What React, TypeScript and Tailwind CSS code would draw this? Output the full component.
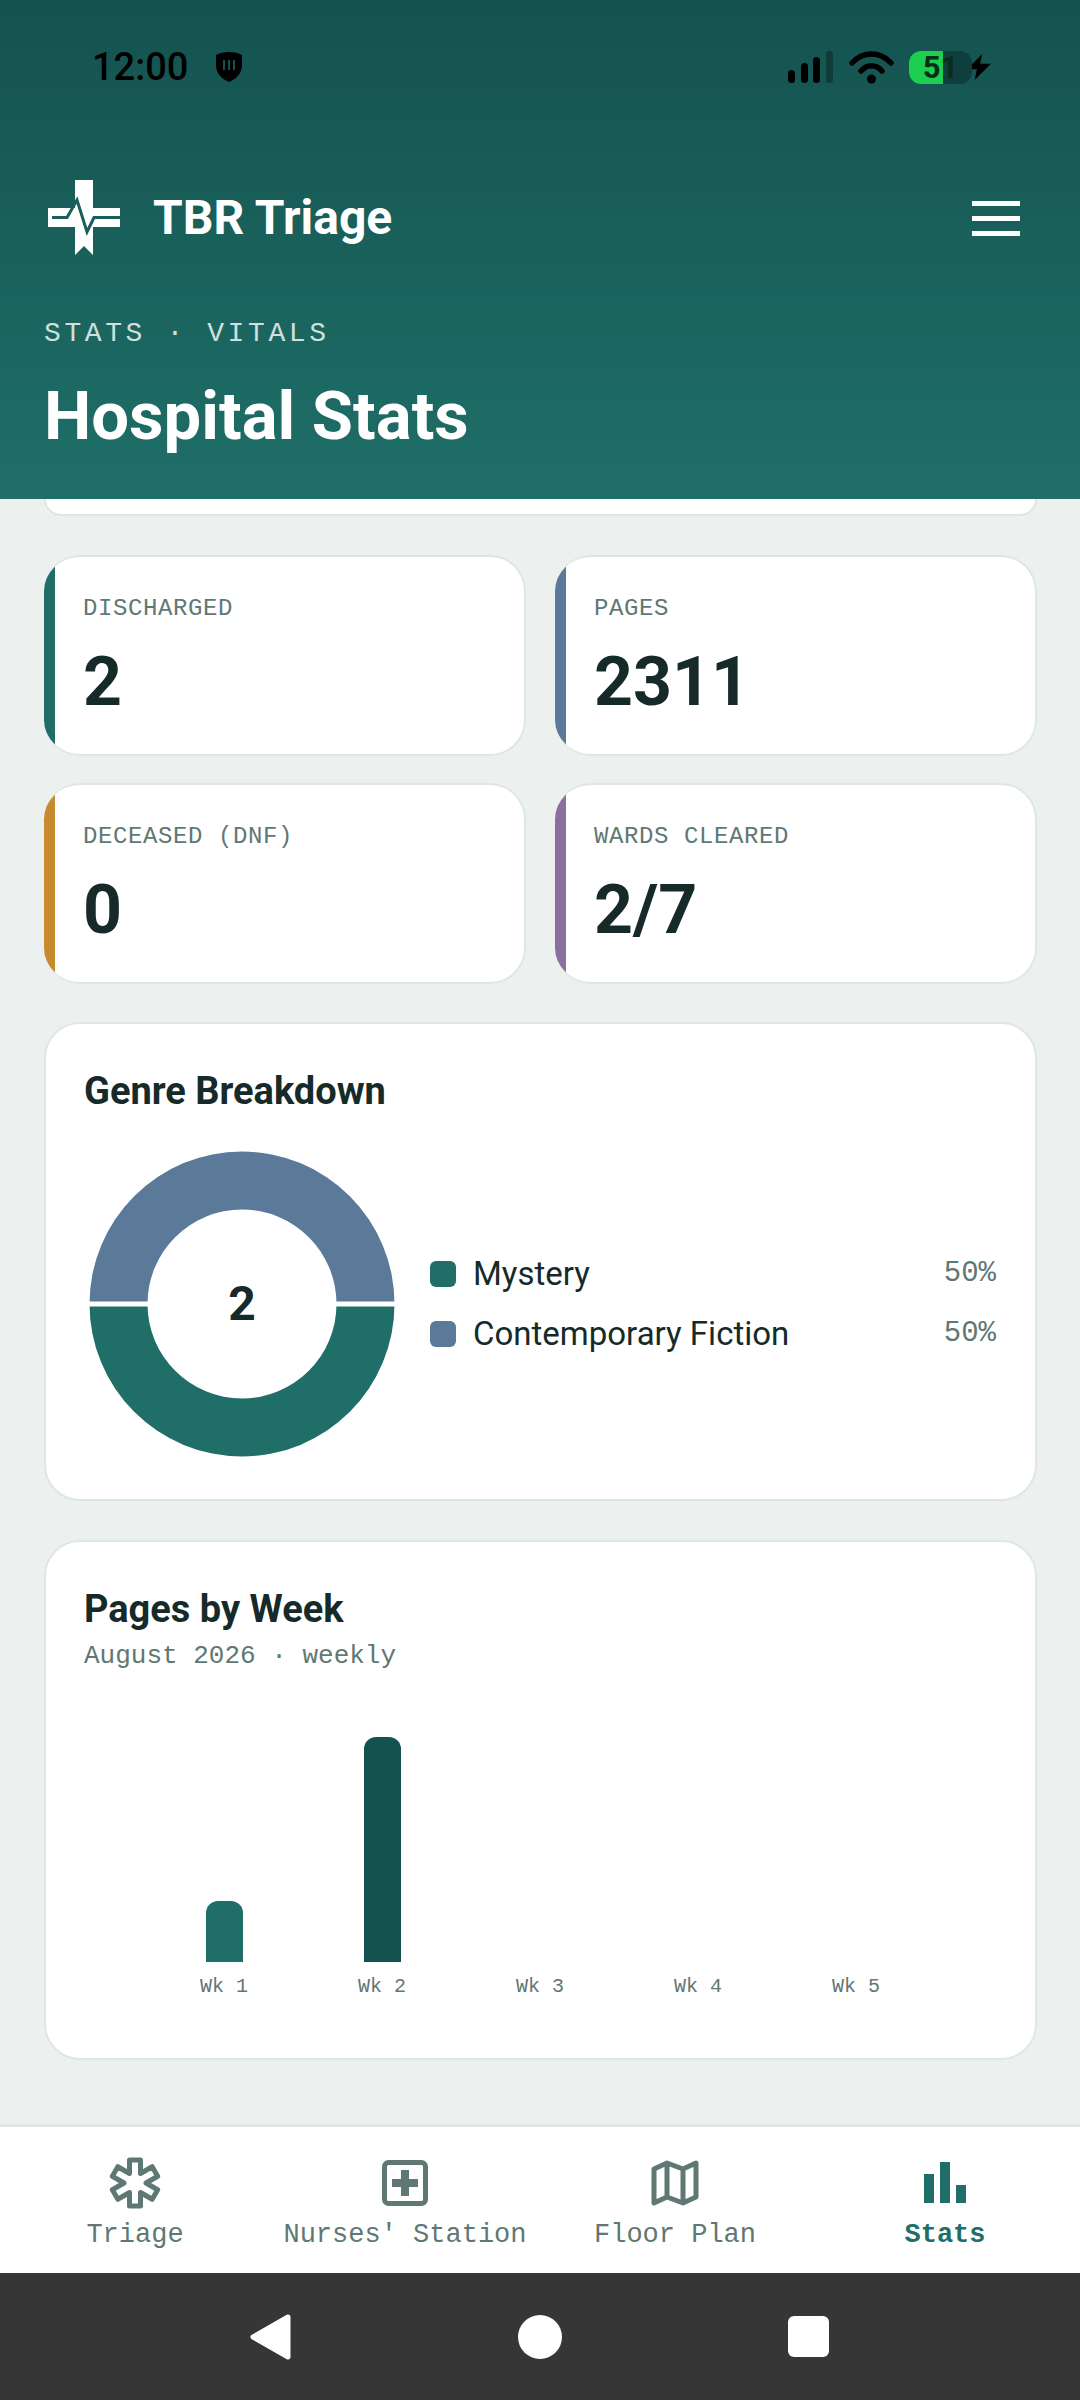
const sans = "font-['Roboto',sans-serif]";
const mono = "font-['Liberation_Mono',monospace]";

const stats = [
  { label: "DISCHARGED", value: "2", accent: "bg-[#1f6f68]" },
  { label: "PAGES", value: "2311", accent: "bg-[#5b7a99]" },
  { label: "DECEASED (DNF)", value: "0", accent: "bg-[#c88a2e]" },
  { label: "WARDS CLEARED", value: "2/7", accent: "bg-[#8b6fa0]" },
];

const weeks = [
  { label: "Wk 1", bar: "h-[61px] bg-[#1f6f68]" },
  { label: "Wk 2", bar: "h-[225px] bg-[#14524f]" },
  { label: "Wk 3", bar: "" },
  { label: "Wk 4", bar: "" },
  { label: "Wk 5", bar: "" },
];

// star of life outline, worked out from the arm size
const starPoints = Array.from({ length: 6 }, (_, i) => {
  const a = ((i * 60 - 90) * Math.PI) / 180;
  const b = a + Math.PI / 6;
  const L = 23;
  const w = 5.5;
  const p = (x: number, y: number) => `${(26 + x).toFixed(2)},${(26 + y).toFixed(2)}`;
  return [
    p(L * Math.cos(a) + w * Math.sin(a), L * Math.sin(a) - w * Math.cos(a)),
    p(L * Math.cos(a) - w * Math.sin(a), L * Math.sin(a) + w * Math.cos(a)),
    p(2 * w * Math.cos(b), 2 * w * Math.sin(b)),
  ].join(" ");
}).join(" ");

const StatusBar = () => (
  <div className="flex h-[44px] items-center justify-between pl-[92px] pr-[89px] text-black">
    <div className="flex items-center gap-[26px]">
      <span className={`${sans} text-[38px] leading-none font-medium`}>12:00</span>
      <svg width="30" height="32" viewBox="0 0 30 32">
        <path d="M15 1 C20 1 25 2 28 4 L28 14 C28 23 22 28 15 31 C8 28 2 23 2 14 L2 4 C5 2 10 1 15 1Z" fill="#000" />
        <path d="M10 9v10M15 9v10M20 9v10" stroke="#14524f" strokeWidth="2" />
      </svg>
    </div>
    <div className="flex items-center">
      <svg width="46" height="34" viewBox="0 0 46 34">
        <rect x="0" y="20" width="7" height="13" rx="3.5" fill="#000" />
        <rect x="13" y="13" width="7" height="20" rx="3.5" fill="#000" />
        <rect x="25" y="7" width="7" height="26" rx="3.5" fill="#000" />
        <rect x="38" y="1" width="7" height="32" rx="3.5" fill="#0f3b39" />
      </svg>
      <svg className="ml-[15px]" width="45" height="34" viewBox="0 0 45 34">
        <path d="M3 13 C14 1 31 1 42 13" fill="none" stroke="#000" strokeWidth="5.5" strokeLinecap="round" />
        <path d="M12 21 C18 14 27 14 33 21" fill="none" stroke="#000" strokeWidth="5.5" strokeLinecap="round" />
        <circle cx="22.5" cy="29" r="4.5" fill="#000" />
      </svg>
      <div className="relative ml-[15px] flex h-[33px] w-[63px] items-center justify-center rounded-[12px] bg-[#0f3f3d]">
        <div className="absolute inset-y-0 left-0 w-[34px] rounded-l-[12px] bg-[#1ccf4e]"></div>
        <span className={`${sans} relative text-[31px] leading-[33px] font-bold text-[#0b2b1b]`}>51</span>
      </div>
      <svg className="-ml-[5px]" width="24" height="26" viewBox="0 0 22 24">
        <path d="M14 0 L0 14 L9 14 L7 24 L22 9 L12 9 Z" fill="#000" />
      </svg>
    </div>
  </div>
);

const Header = () => (
  <header className="h-[499px] bg-gradient-to-b from-[#14524f] to-[#1f6f68] pt-[45px]">
    <StatusBar />
    <div className="mt-[91px] flex items-center justify-between pl-[48px] pr-[60px]">
      <div className="flex items-center">
        <svg width="72" height="76" viewBox="0 0 72 76">
          <path d="M27 0 H45 V28 H72 V47 H45 V75 L36 66 L27 75 V47 H0 V28 H27 Z" fill="#fff" />
          <path d="M4 37.5 H19 L29 20 L39 52 L46 37.5 H72" fill="none" stroke="#1a5f5b" strokeWidth="3" />
        </svg>
        <span className={`${sans} ml-[33px] text-[48px] leading-none font-bold text-white`}>TBR Triage</span>
      </div>
      <div className="flex w-[48px] flex-col gap-[10px]">
        <div className="h-[5px] bg-white"></div>
        <div className="h-[5px] bg-white"></div>
        <div className="h-[5px] bg-white"></div>
      </div>
    </div>
    <div className="mt-[64px] pl-[44px]">
      <div className={`${mono} text-[28px] leading-none tracking-[3.6px] text-[#cfe0dd]`}>STATS · VITALS</div>
      <h1 className={`${sans} mt-[35px] text-[67px] leading-none font-bold text-white`}>Hospital Stats</h1>
    </div>
  </header>
);

const StatCard = ({ label, value, accent }: { label: string; value: string; accent: string }) => (
  <div className="relative h-[201px] overflow-hidden rounded-[36px] border-2 border-l-0 border-[#dfe7e5] bg-white pt-[38px] pl-[39px]">
    <div className={`absolute inset-y-0 left-0 w-[11px] ${accent}`}></div>
    <div className={`${mono} text-[24px] leading-[28px] tracking-[0.6px] text-[#5f7873]`}>{label}</div>
    <div className={`${sans} mt-[24px] text-[68px] leading-[70px] font-bold text-[#162b29]`}>{value}</div>
  </div>
);

const GenreCard = () => (
  <section className="mt-[38px] h-[479px] rounded-[36px] border-2 border-[#dfe7e5] bg-white pt-[45px] pr-[39px] pl-[38px]">
    <h2 className={`${sans} text-[38px] leading-[44px] font-bold text-[#162b29]`}>Genre Breakdown</h2>
    <div className="mt-[38px] flex items-center">
      <div className="relative ml-[5px] h-[306px] w-[306px] shrink-0">
        <svg width="306" height="306" viewBox="0 0 306 306">
          <path d="M0.5 153 A152.5 152.5 0 0 1 305.5 153 H247.5 A94.5 94.5 0 0 0 58.5 153 Z" fill="#5b7a99" />
          <path d="M0.5 153 A152.5 152.5 0 0 0 305.5 153 H247.5 A94.5 94.5 0 0 1 58.5 153 Z" fill="#1f6f68" />
          <rect x="0" y="150.5" width="306" height="5" fill="#fff" />
        </svg>
        <span className={`${sans} absolute inset-0 flex items-center justify-center text-[48px] font-bold text-[#162b29]`}>2</span>
      </div>
      <div className="ml-[35px] flex flex-1 flex-col gap-[34px]">
        <div className="flex h-[26px] items-center">
          <div className="h-[26px] w-[26px] rounded-[6px] bg-[#1f6f68]"></div>
          <span className={`${sans} ml-[17px] flex-1 text-[33px] text-[#162b29]`}>Mystery</span>
          <span className={`${mono} text-[29px] text-[#5f7873]`}>50%</span>
        </div>
        <div className="flex h-[26px] items-center">
          <div className="h-[26px] w-[26px] rounded-[6px] bg-[#5b7a99]"></div>
          <span className={`${sans} ml-[17px] flex-1 text-[33px] text-[#162b29]`}>Contemporary Fiction</span>
          <span className={`${mono} text-[29px] text-[#5f7873]`}>50%</span>
        </div>
      </div>
    </div>
  </section>
);

const WeekCard = () => (
  <section className="mt-[39px] h-[520px] rounded-[36px] border-2 border-[#dfe7e5] bg-white pt-[45px] pl-[38px]">
    <h2 className={`${sans} text-[38px] leading-[44px] font-bold text-[#162b29]`}>Pages by Week</h2>
    <div className={`${mono} mt-[9px] text-[26px] leading-[32px] text-[#5f7873]`}>August 2026 · weekly</div>
    <div className="mt-[65px] ml-[61px] flex h-[225px] items-end">
      {weeks.map((w) => (
        <div key={w.label} className="flex w-[158px] justify-center">
          {w.bar && <div className={`w-[37px] rounded-t-[12px] ${w.bar}`}></div>}
        </div>
      ))}
    </div>
    <div className="mt-[13px] ml-[61px] flex">
      {weeks.map((w) => (
        <div key={w.label} className={`${mono} w-[158px] text-center text-[20px] leading-[24px] text-[#5f7873]`}>
          {w.label}
        </div>
      ))}
    </div>
  </section>
);

const navItems = [
  {
    label: "Triage",
    icon: (
      <svg width="52" height="52" viewBox="0 0 52 52">
        <polygon points={starPoints} fill="none" stroke="#5f7873" strokeWidth="5" strokeLinejoin="round" />
      </svg>
    ),
  },
  {
    label: "Nurses' Station",
    icon: (
      <svg width="48" height="48" viewBox="0 0 48 48">
        <rect x="3.5" y="3.5" width="41" height="41" rx="4" fill="none" stroke="#5f7873" strokeWidth="5" />
        <path d="M24 11 V37 M11 24 H37" stroke="#5f7873" strokeWidth="8" />
      </svg>
    ),
  },
  {
    label: "Floor Plan",
    icon: (
      <svg width="48" height="48" viewBox="0 0 48 48">
        <path d="M3 10 L16 4 L32 10 L45 4 V38 L32 44 L16 38 L3 44 Z M16 4 V38 M32 10 V44" fill="none" stroke="#5f7873" strokeWidth="5" strokeLinejoin="round" />
      </svg>
    ),
  },
  {
    label: "Stats",
    active: true,
    icon: (
      <svg width="42" height="42" viewBox="0 0 42 42">
        <rect x="0" y="12" width="10" height="29" fill="#1f6f68" />
        <rect x="16" y="0" width="10" height="41" fill="#1f6f68" />
        <rect x="32" y="23" width="10" height="18" fill="#1f6f68" />
      </svg>
    ),
  },
];

const BottomNav = () => (
  <nav className="grid h-[149px] grid-cols-4 border-t-[3px] border-[#dfe7e5] bg-white">
    {navItems.map((item) => (
      <div key={item.label} className="flex flex-col items-center pt-[28px]">
        <div className="flex h-[56px] items-center justify-center">{item.icon}</div>
        <span className={`${mono} mt-[8px] text-[27px] leading-[32px] ${item.active ? "font-bold text-[#1f6f68]" : "text-[#5f7873]"}`}>
          {item.label}
        </span>
      </div>
    ))}
  </nav>
);

const SystemNav = () => (
  <div className="flex h-[127px] items-center justify-center gap-[226px] bg-[#363636] pr-[2px]">
    <svg width="42" height="46" viewBox="0 0 42 46">
      <path d="M38 3 L3 23 L38 43 Z" fill="#fff" stroke="#fff" strokeWidth="5" strokeLinejoin="round" />
    </svg>
    <div className="h-[44px] w-[44px] rounded-full bg-white"></div>
    <div className="h-[41px] w-[41px] rounded-[6px] bg-white"></div>
  </div>
);

export default function App() {
  return (
    <div className="flex h-[2400px] w-[1080px] flex-col overflow-hidden bg-[#ecf0ef]">
      <Header />
      <main className="h-[1625px] flex-1 overflow-hidden pr-[43px] pl-[44px]">
        <div className="h-[17px] rounded-b-[36px] border-x-2 border-b-2 border-[#dfe7e5] bg-white"></div>
        <div className="mt-[39px] grid grid-cols-2 gap-x-[29px] gap-y-[27px]">
          {stats.map((s) => (
            <StatCard key={s.label} {...s} />
          ))}
        </div>
        <GenreCard />
        <WeekCard />
      </main>
      <BottomNav />
      <SystemNav />
    </div>
  );
}
